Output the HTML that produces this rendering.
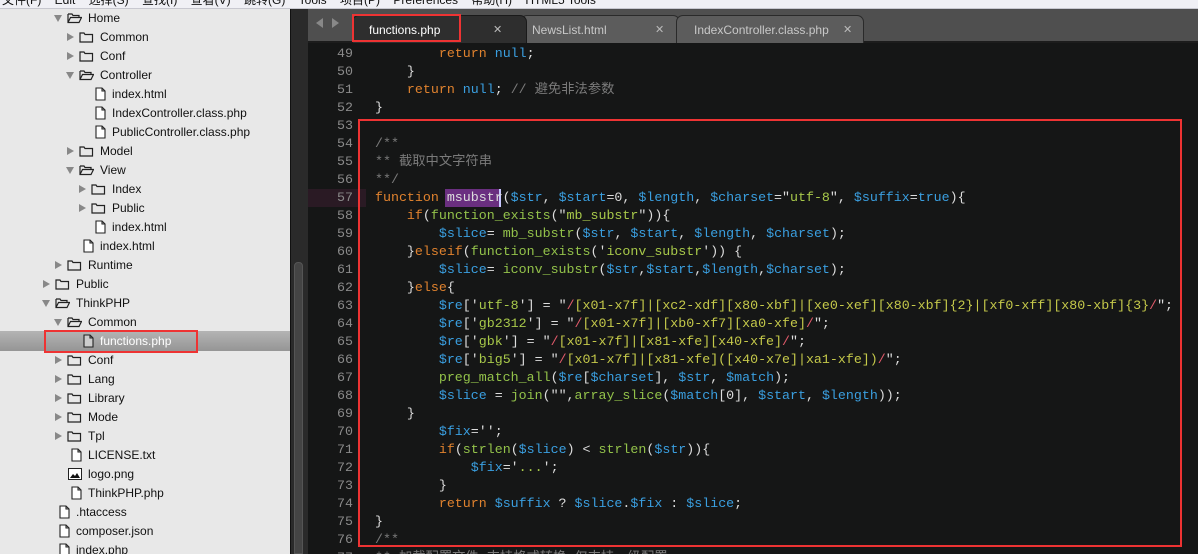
<!DOCTYPE html>
<html style="width:1198px;height:554px;overflow:hidden"><head><meta charset="utf-8"><style>
*{margin:0;padding:0;box-sizing:border-box}
body{width:1198px;height:554px;overflow:hidden;background:#151616;position:relative;font-family:"Liberation Sans","Noto Sans CJK SC",sans-serif}
#menu{position:absolute;left:0;top:0;width:1198px;height:9px;background:#f0f0f5;border-bottom:1px solid #c8c8d0;overflow:hidden}
#menu span{position:absolute;top:-9px;font-size:12px;color:#111}
#side{position:absolute;left:0;top:9px;width:290px;height:545px;background:#e8e8e8;overflow:hidden}
.r{position:absolute;height:19px;line-height:19px;font-size:12px;color:#111;white-space:nowrap}
.ar{position:absolute;width:0;height:0}
.ar.c{border-left:7px solid #888;border-top:4px solid transparent;border-bottom:4px solid transparent}
.ar.o{border-top:7px solid #888;border-left:4px solid transparent;border-right:4px solid transparent}
#dark{position:absolute;left:290px;top:9px;width:18px;height:545px;background:#2a2a2a;border-left:1px solid #111}
#thumb{position:absolute;left:294px;top:262px;width:9px;height:292px;background:#444;border-radius:4px 4px 0 0;border:1px solid #555}
#tabs{position:absolute;left:308px;top:9px;width:890px;height:34px;background:#4f4f4f;border-bottom:2px solid #1c1c1c}
.tab{position:absolute;top:6px;height:28px;border-radius:7px 7px 0 0;font-size:12px;line-height:28px;padding-left:16px;white-space:nowrap}
.x{position:absolute;top:0;font-size:11px;color:#bbb}
#code{position:absolute;left:308px;top:43px;width:890px;height:511px;background:#151616}
.ln{position:absolute;left:308px;width:45px;text-align:right;font-family:"Liberation Mono",monospace;font-size:13.3px;color:#8a8a8a;height:18px;line-height:18px}
.cl{position:absolute;left:375px;font-family:"Liberation Mono","Noto Sans CJK SC",monospace;font-size:13.3px;height:18px;line-height:18px;white-space:pre;color:#ddd}
.k{color:#e0822e}.v{color:#3a9fe0}.f{color:#93c24a}.s{color:#a8c94a}.c{color:#7a7a7a}.p{color:#ddd}.re{color:#c5c94a}.sl{color:#e05a6a}.n{color:#ddd}
#wrap{position:absolute;left:0;top:0;width:1198px;height:554px;overflow:hidden}
</style></head><body><div id="wrap">
<div id="menu"><span style="left:2px">文件(F)&nbsp;&nbsp;&nbsp; Edit&nbsp;&nbsp;&nbsp; 选择(S)&nbsp;&nbsp;&nbsp; 查找(I)&nbsp;&nbsp;&nbsp; 查看(V)&nbsp;&nbsp;&nbsp; 跳转(G)&nbsp;&nbsp;&nbsp; Tools&nbsp;&nbsp;&nbsp; 项目(P)&nbsp;&nbsp;&nbsp; Preferences&nbsp;&nbsp;&nbsp; 帮助(H)&nbsp;&nbsp;&nbsp; HTML5 Tools</span></div>
<div id="side">
<div style="position:absolute;left:0;top:322px;width:290px;height:20px;background:linear-gradient(#b4b4b4,#959595)"></div>
</div>
<div id="sbrows"></div>
<div id="dark"></div><div id="thumb"></div>
<div id="tabs">
<div style="position:absolute;left:8px;top:9px;width:0;height:0;border-right:7px solid #888;border-top:5px solid transparent;border-bottom:5px solid transparent"></div>
<div style="position:absolute;left:24px;top:9px;width:0;height:0;border-left:7px solid #888;border-top:5px solid transparent;border-bottom:5px solid transparent"></div>
<div class="tab" style="left:212px;width:160px;background:#5c5c5c;color:#c8c8c8;border:1px solid #2a2a2a;border-bottom:none;padding-left:11px">NewsList.html<span class="x" style="left:134px">✕</span></div>
<div class="tab" style="left:368px;width:188px;background:#5c5c5c;color:#c8c8c8;border:1px solid #2a2a2a;border-bottom:none;padding-left:17px">IndexController.class.php<span class="x" style="left:166px">✕</span></div>
<div class="tab" style="left:44px;width:175px;background:#2e2e2e;color:#fff;border:1px solid #1a1a1a;border-bottom:none">functions.php<span class="x" style="left:140px">✕</span></div>
</div>
<div id="code"></div>
<div style="position:absolute;left:308px;top:189px;width:58px;height:18px;background:#2a1a24"></div>
<div style="position:absolute;left:445px;top:189px;width:56px;height:18px;background:#6a2f80;border-right:2px solid #c8c8ff"></div>
<div id="lines"></div>
<div style="position:absolute;left:358px;top:119px;width:824px;height:428px;border:2px solid #ee3333"></div>
<div style="position:absolute;left:352px;top:14px;width:109px;height:28px;border:2px solid #ee3333"></div>
<div style="position:absolute;left:44px;top:330px;width:154px;height:23px;border:2px solid #ee3333"></div>
</div>
<script>
var rows=[["Home",18,88,"o"],["Common",37,100,"c"],["Conf",56,100,"c"],["Controller",75,100,"o"],["index.html",94,112,"f"],["IndexController.class.php",113,112,"f"],["PublicController.class.php",132,112,"f"],["Model",151,100,"c"],["View",170,100,"o"],["Index",189,112,"c"],["Public",208,112,"c"],["index.html",227,112,"f"],["index.html",246,100,"f"],["Runtime",265,88,"c"],["Public",284,76,"c"],["ThinkPHP",303,76,"o"],["Common",322,88,"o"],["functions.php",341,100,"f"],["Conf",360,88,"c"],["Lang",379,88,"c"],["Library",398,88,"c"],["Mode",417,88,"c"],["Tpl",436,88,"c"],["LICENSE.txt",455,88,"f"],["logo.png",474,88,"i"],["ThinkPHP.php",493,88,"f"],[".htaccess",512,76,"f"],["composer.json",531,76,"f"],["index.php",550,76,"f"]];
var h="";
rows.forEach(function(r){var t=r[1]-9,x=r[2],k=r[3];
 if(k=="c")h+='<div class="ar c" style="left:'+(x-33)+'px;top:'+(r[1]-4)+'px"></div>';
 if(k=="o")h+='<div class="ar o" style="left:'+(x-34)+'px;top:'+(r[1]-3)+'px"></div>';
 if(k=="c"||k=="o")h+='<svg style="position:absolute;left:'+(x-21)+'px;top:'+(r[1]-6)+'px" width="15" height="12"><path d="'+(k=="c"?'M1 2h4l1 1.5h7.5v7.5h-12.5z':'M1 2h4l1 1.5h6v2M1 2v8.5h11l2.5-5h-11l-2.5 5')+'" fill="none" stroke="#222" stroke-width="1.2"/></svg>';
 if(k=="f")h+='<svg style="position:absolute;left:'+(x-17)+'px;top:'+(r[1]-7)+'px" width="11" height="14"><path d="M1 1h6l3 3v9h-9z M7 1v3h3" fill="'+(r[0]=="functions.php"?"#ccc":"#fff")+'" stroke="#222" stroke-width="1.1"/></svg>';
 if(k=="i")h+='<svg style="position:absolute;left:'+(x-20)+'px;top:'+(r[1]-6)+'px" width="14" height="12"><rect x="0.5" y="0.5" width="13" height="11" fill="#fff" stroke="#222"/><path d="M2 10l3-4 2 2 2-3 3 5z" fill="#111"/></svg>';
 h+='<div class="r" style="left:'+x+'px;top:'+t+'px;'+(r[0]=="functions.php"?'color:#fff':'')+'">'+r[0]+'</div>';});
document.getElementById("sbrows").innerHTML=h;
function V(s){return '<span class="v">'+s+'</span>'}
function K(s){return '<span class="k">'+s+'</span>'}
function F(s){return '<span class="f">'+s+'</span>'}
function S(s){return '<span class="s">'+s+'</span>'}
function C(s){return '<span class="c">'+s+'</span>'}
function R(s){return '"<span class="sl">/</span><span class="re">'+s+'</span><span class="sl">/</span>"'}
var L={49:'        '+K('return')+' '+V('null')+';',50:'    }',51:'    '+K('return')+' '+V('null')+'; '+C('// 避免非法参数'),52:'}',53:'',
54:C('/**'),55:C('** 截取中文字符串'),56:C('**/'),
57:K('function')+' msubstr('+V('$str')+', '+V('$start')+'=0, '+V('$length')+', '+V('$charset')+'="'+S('utf-8')+'", '+V('$suffix')+'='+V('true')+'){',
58:'    '+K('if')+'('+F('function_exists')+'("'+S('mb_substr')+'")){',
59:'        '+V('$slice')+'= '+F('mb_substr')+'('+V('$str')+', '+V('$start')+', '+V('$length')+', '+V('$charset')+');',
60:'    }'+K('elseif')+'('+F('function_exists')+'(\''+S('iconv_substr')+'\')) {',
61:'        '+V('$slice')+'= '+F('iconv_substr')+'('+V('$str')+','+V('$start')+','+V('$length')+','+V('$charset')+');',
62:'    }'+K('else')+'{',
63:'        '+V('$re')+'[\''+S('utf-8')+'\'] = '+R('[x01-x7f]|[xc2-xdf][x80-xbf]|[xe0-xef][x80-xbf]{2}|[xf0-xff][x80-xbf]{3}')+';',
64:'        '+V('$re')+'[\''+S('gb2312')+'\'] = '+R('[x01-x7f]|[xb0-xf7][xa0-xfe]')+';',
65:'        '+V('$re')+'[\''+S('gbk')+'\'] = '+R('[x01-x7f]|[x81-xfe][x40-xfe]')+';',
66:'        '+V('$re')+'[\''+S('big5')+'\'] = '+R('[x01-x7f]|[x81-xfe]([x40-x7e]|xa1-xfe])')+';',
67:'        '+F('preg_match_all')+'('+V('$re')+'['+V('$charset')+'], '+V('$str')+', '+V('$match')+');',
68:'        '+V('$slice')+' = '+F('join')+'("",'+F('array_slice')+'('+V('$match')+'[0], '+V('$start')+', '+V('$length')+'));',
69:'    }',70:'',
71:'        '+V('$fix')+'=\'\';',
72:'        '+K('if')+'('+F('strlen')+'('+V('$slice')+') &lt; '+F('strlen')+'('+V('$str')+')){',
73:'            '+V('$fix')+'=\''+S('...')+'\';',
74:'        }',
75:'        '+K('return')+' '+V('$suffix')+' ? '+V('$slice')+'.'+V('$fix')+' : '+V('$slice')+';',
76:'}',77:C('/**'),78:C('** 加载配置文件 支持格式转换 仅支持一级配置')};
var M={49:49,50:50,51:51,52:52,53:53,54:54,55:55,56:56,57:57,58:58,59:59,60:60,61:61,62:62,63:63,64:64,65:65,66:66,67:67,68:68,69:69,70:71,71:72,72:73,73:74,74:75,75:76,76:77,77:78};
var o="";
for(var n=49;n<=77;n++){var t=45+(n-49)*18;
 o+='<div class="ln" style="top:'+t+'px">'+n+'</div>';
 o+='<div class="cl" style="top:'+t+'px">'+L[M[n]]+'</div>';}
document.getElementById("lines").innerHTML=o;
</script>
</body></html>
